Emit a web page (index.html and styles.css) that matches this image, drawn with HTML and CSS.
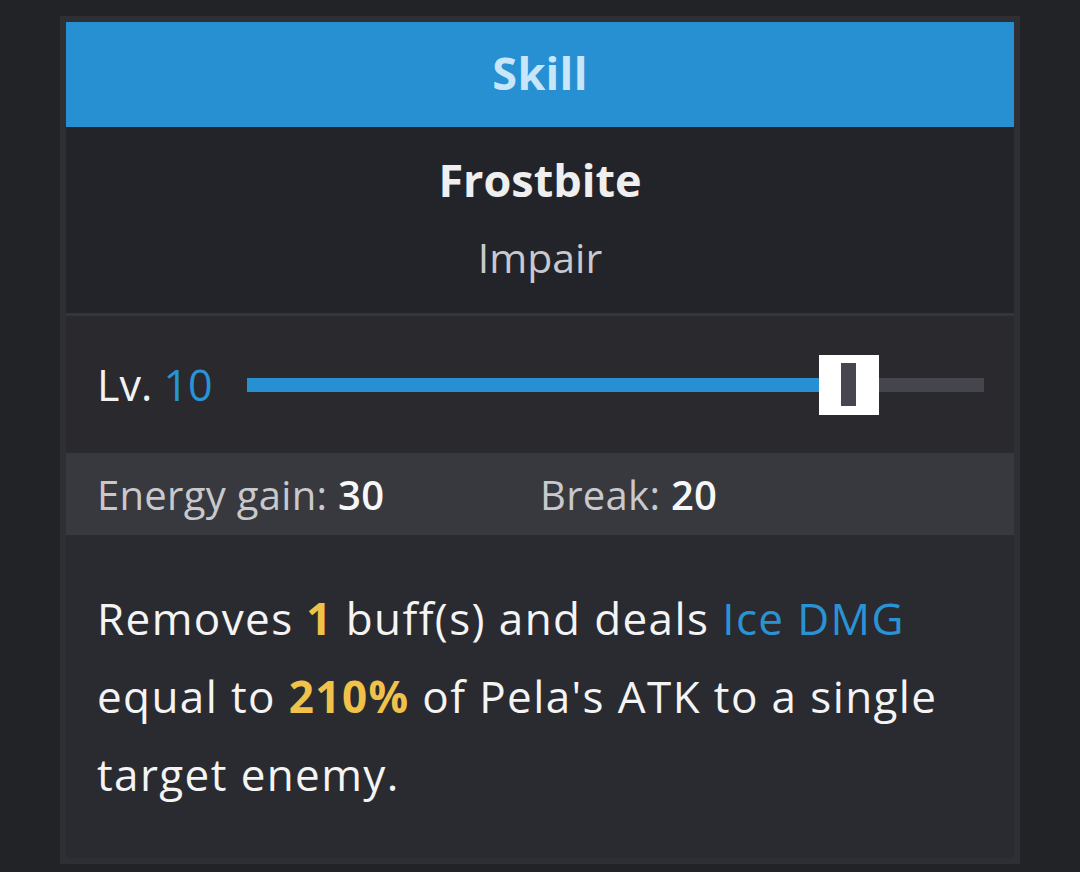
FILE: index.html
```html
<!DOCTYPE html>
<html lang="en">
<head>
<meta charset="utf-8">
<title>Skill - Frostbite</title>
<link rel="stylesheet" href="styles.css">
</head>
<body>
<div class="card">
  <div class="card-header">Skill</div>
  <div class="title-block">
    <div class="skill-name">Frostbite</div>
    <div class="skill-type">Impair</div>
  </div>
  <div class="level-block">
    <div class="level-label">Lv. <span class="level-value">10</span></div>
    <div class="slider">
      <div class="slider-fill" style="width: 77.6%"></div>
      <div class="slider-thumb" style="left: 77.6%"><span class="thumb-grip"></span></div>
    </div>
  </div>
  <div class="stats-block">
    <div class="stat"><span class="stat-label">Energy gain:</span> <span class="stat-value">30</span></div>
    <div class="stat"><span class="stat-label">Break:</span> <span class="stat-value">20</span></div>
  </div>
  <div class="desc-block">
    Removes <span class="hl-num">1</span> buff(s) and deals <span class="hl-ice">Ice DMG</span> equal to <span class="hl-num">210%</span> of Pela's ATK to a single target enemy.
  </div>
</div>
</body>
</html>
```
FILE: styles.css
```css
* { box-sizing: border-box; }
html, body {
  margin: 0;
  padding: 0;
  background: #222327;
  font-family: "Open Sans", "Noto Sans", sans-serif;
  color: #f2f2f3;
}
body { padding-top: 16px; padding-left: 60px; }
.card {
  width: 960px;
  border: 6px solid #2e2f35;
  background: #2a2b30;
}
.card-header {
  background: #2690d2;
  color: #c8e6fa;
  font-weight: 700;
  font-size: 45px;
  letter-spacing: 0.3px;
  text-align: center;
  line-height: 101px;
  padding-bottom: 4px;
  height: 105px;
}
.title-block {
  background: #232429;
  text-align: center;
  padding: 23px 0 27px;
  height: 189px;
  border-bottom: 3px solid #34353b;
}
.skill-name {
  font-weight: 700;
  font-size: 45px;
  line-height: 60px;
  color: #efeff0;
}
.skill-type {
  margin-top: 19px;
  font-size: 41px;
  line-height: 56px;
  color: #c9c9cd;
}
.level-block {
  background: #29292e;
  height: 137px;
  display: flex;
  align-items: center;
  padding: 0 30px 0 31px;
  gap: 34px;
}
.level-label {
  font-size: 43px;
  color: #f2f2f3;
  white-space: nowrap;
}
.level-value { color: #2a93d5; }
.slider {
  position: relative;
  flex: 1;
  height: 14px;
  background: #45454d;
}
.slider-fill {
  height: 100%;
  background: #2690d2;
}
.slider-thumb {
  position: absolute;
  top: -23px;
  width: 60px;
  height: 60px;
  background: #ffffff;
  display: flex;
  align-items: center;
  justify-content: center;
}
.thumb-grip {
  width: 15px;
  height: 43px;
  background: #46464f;
}
.stats-block {
  background: #38393f;
  height: 82px;
  display: grid;
  grid-template-columns: 1fr 1fr;
  align-items: center;
  padding: 0 31px;
  font-size: 40px;
  letter-spacing: 0.3px;
}
.stat-label { color: #c9c9cd; }
.stat-value { color: #f7f7f8; font-weight: 600; }
.desc-block {
  background: #2a2b30;
  padding: 44px 31px 45px;
  font-size: 44px;
  letter-spacing: 1.4px;
  line-height: 78px;
  color: #f4f4f5;
}
.hl-num { color: #f0c24a; font-weight: 700; }
.hl-ice { color: #2a93d5; }
```
